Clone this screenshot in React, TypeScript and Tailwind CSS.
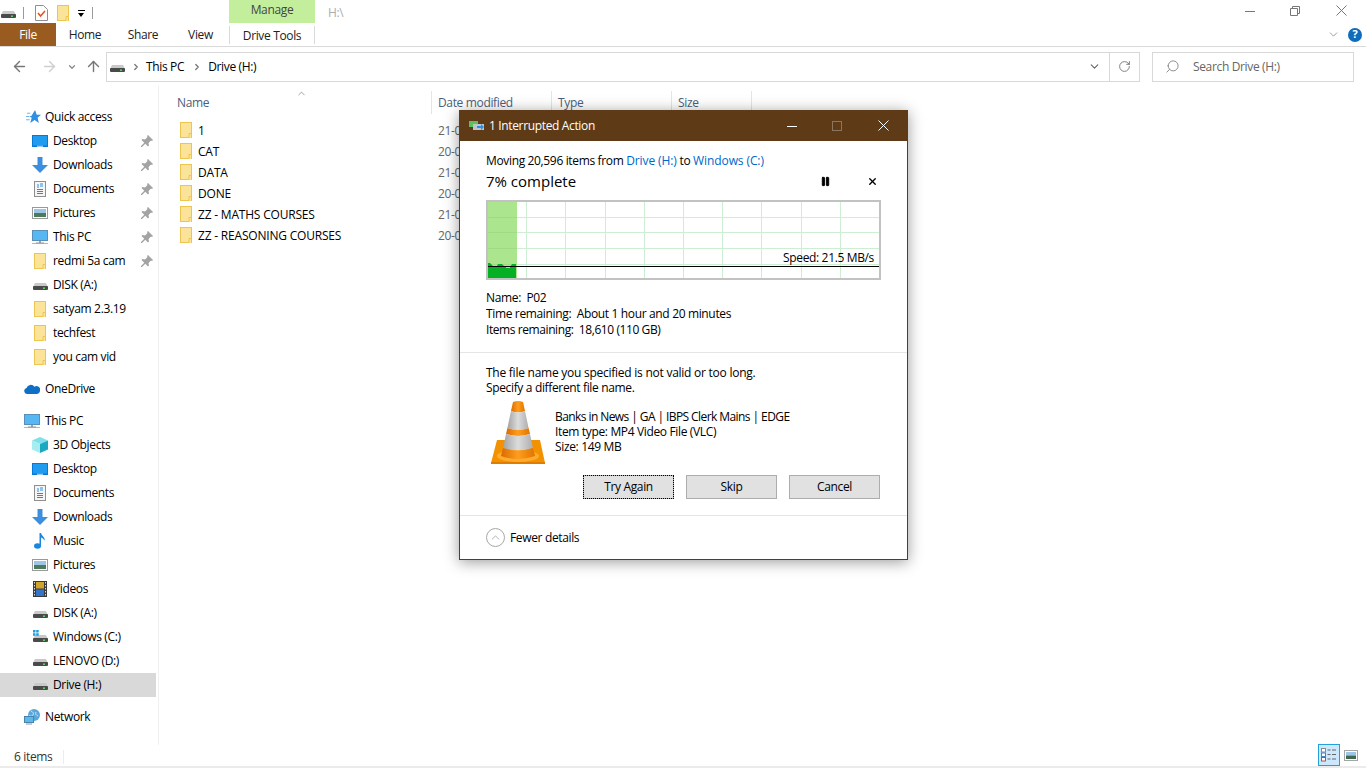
import { ChevronDown, ChevronRight, ChevronUp, ArrowLeft, ArrowRight, ArrowUp, RotateCw, Search, X, Pause } from "lucide-react";

const Folder = ({ className = "" }: { className?: string }) => (
  <svg width="12" height="17" viewBox="0 0 12 17" className={className}>
    <rect x="0.5" y="0.5" width="11" height="15" fill="#fbe39a" stroke="#eec64f" />
    <path d="M9 16V11.5h2.5V16" fill="#fbe39a" stroke="#eec64f" />
  </svg>
);

const Drive = ({ windows = false }: { windows?: boolean }) => (
  <svg width="15" height="12" viewBox="0 0 15 12" className="overflow-visible">
    <path d="M2 4h11l2 4H0z" fill="#c9c9c9" />
    <rect x="0" y="7" width="15" height="4" rx="1" fill="#4a4a4a" />
    <rect x="10" y="8.5" width="2" height="1.4" fill="#5be05b" />
    {windows && <path d="M0-4h2.5v2.5H0zM3.200-4h2.500v2.500H3.200zM0-.8h2.500v2.500H0zM3.200-.8h2.500v2.500H3.200z" fill="#1b9de2" transform="translate(0 3)" />}
  </svg>
);

const Pin = () => (
  <svg width="12" height="12" viewBox="0 0 12 12">
    <path d="M7 0l5 5-1 1-1-.5L7.500 8 8 10.500 7 11.500 4.300 8.700 1 12l-1 0 0-1 3.300-3.300L.5 5 1.500 4 4 4.500 6.500 2 6 1z" fill="#a3a3a3" />
  </svg>
);

const Desktop = () => (
  <svg width="16" height="13" viewBox="0 0 16 13">
    <rect width="16" height="12" fill="#0a78d7" />
    <rect x="1" y="1" width="14" height="9.500" fill="#1f9bf0" />
    <rect x="5" y="10.800" width="6" height="0.800" fill="#fff" />
  </svg>
);

const Downloads = () => (
  <svg width="16" height="16" viewBox="0 0 16 16">
    <path d="M5.500 0h5v8H16l-8 8-8-8h5.500z" fill="#3b8fde" />
  </svg>
);

const Documents = () => (
  <svg width="12" height="16" viewBox="0 0 12 16">
    <rect x="0.500" y="0.500" width="11" height="15" fill="#f5f5f5" stroke="#8f8f8f" />
    <path d="M3 4h2M3 6h2M6 3h3M6 5h3" stroke="#2c8ee0" />
    <path d="M3 8.500h6M3 10.500h6M3 12.500h6" stroke="#777" />
  </svg>
);

const Pictures = () => (
  <svg width="16" height="12" viewBox="0 0 16 12">
    <rect x="0.500" y="0.500" width="15" height="11" fill="#fff" stroke="#999" />
    <rect x="2" y="2" width="12" height="4" fill="#9cc6e8" />
    <rect x="2" y="6" width="12" height="4" fill="#4e7a5c" />
  </svg>
);

const ThisPC = () => (
  <svg width="16" height="15" viewBox="0 0 16 15">
    <rect x="0.500" y="0.500" width="15" height="10" fill="#55b8f2" stroke="#5a90b8" />
    <rect x="7" y="11" width="2" height="2" fill="#9aa7b0" />
    <rect x="0" y="13" width="16" height="1" fill="#aebbc4" />
    <rect x="4" y="12.500" width="8" height="1" fill="#8b98a0" />
  </svg>
);

const Star = () => (
  <svg width="15" height="14" viewBox="0 0 14 13" className="ml-[2px]">
    <path d="M8.500 0l1.500 4.300 4 .2-3.200 2.700L12 12 8 9.300 4 12l1.300-4.800L3 5.500h2z" fill="#2f8fe0" />
    <path d="M0 6h3M0 9h3.500M1 3h3" stroke="#6db5ee" />
  </svg>
);

const OneDrive = () => (
  <svg width="16" height="10" viewBox="0 0 16 10">
    <path d="M3 10a3 3 0 0 1-.5-5.900A4.500 4.500 0 0 1 10.500 2.800 3.500 3.500 0 0 1 16 6.500 3.500 3.500 0 0 1 13 10z" fill="#0f6fc6" />
  </svg>
);

const Objects3D = () => (
  <svg width="16" height="16" viewBox="0 0 16 16">
    <path d="M8 0l8 3.500L8 7 0 3.500z" fill="#7fe0ea" />
    <path d="M0 3.500L8 7v9l-8-3.500z" fill="#a6edf2" />
    <path d="M16 3.500L8 7v9l8-3.500z" fill="#1ba8c0" />
  </svg>
);

const Music = () => (
  <svg width="12" height="16" viewBox="0 0 12 16">
    <ellipse cx="3.500" cy="13" rx="3.500" ry="2.800" fill="#1a86de" />
    <path d="M5.500 0h1.500c.5 3 4.500 4 3.500 8-.5-2-2-3-3.500-3.500V13H5.500z" fill="#1a86de" />
  </svg>
);

const Videos = () => (
  <svg width="14" height="16" viewBox="0 0 14 16">
    <rect width="14" height="16" fill="#3a3a3a" />
    <rect x="3" y="1" width="8" height="6.500" fill="#d0a32b" />
    <rect x="3" y="8.500" width="8" height="6.500" fill="#3473c9" />
    <path d="M1 1h1v1.500H1zM1 4h1v1.500H1zM1 7h1v1.500H1zM1 10h1v1.500H1zM1 13h1v1.500H1zM12 1h1v1.500h-1zM12 4h1v1.500h-1zM12 7h1v1.500h-1zM12 10h1v1.500h-1zM12 13h1v1.500h-1z" fill="#ddd" />
  </svg>
);

const Network = () => (
  <svg width="16" height="16" viewBox="0 0 16 16">
    <circle cx="10" cy="6" r="6" fill="#5aa7dc" />
    <path d="M7 2c2 1 3 2 2 4s-3 1-4 0M12 3c-1 2 0 3 2 4" stroke="#cfe6f5" fill="none" />
    <rect x="0.500" y="7.500" width="9" height="6" fill="#5cb9ef" stroke="#4a82a8" />
    <rect x="2" y="14.500" width="6" height="1" fill="#8b98a0" />
  </svg>
);

const Cone = () => (
  <svg width="57" height="63" viewBox="0 0 57 63">
    <defs>
      <linearGradient id="orange" x1="0" x2="1" y1="0" y2="0">
        <stop offset="0" stopColor="#d96a00" />
        <stop offset="0.500" stopColor="#ff9d1e" />
        <stop offset="1" stopColor="#e07400" />
      </linearGradient>
      <linearGradient id="silver" x1="0" x2="1" y1="0" y2="0">
        <stop offset="0" stopColor="#a2a2a2" />
        <stop offset="0.500" stopColor="#dcdcdc" />
        <stop offset="1" stopColor="#adadad" />
      </linearGradient>
    </defs>
    <path d="M7 39h43l5 23H1z" fill="#f39200" />
    <rect x="1" y="61" width="54" height="2" fill="#e07c00" />
    <ellipse cx="28" cy="55" rx="21" ry="6" fill="#ffab2e" />
    <path d="M23 1Q28-1 33 1L35 10Q28 13 21 10z" fill="url(#orange)" />
    <path d="M21 10Q28 13 35 10L38.600 27Q28 31 17.400 27z" fill="url(#silver)" />
    <path d="M17.400 27Q28 31 38.600 27L40 33Q28 37 16 33z" fill="url(#orange)" />
    <path d="M16 33Q28 37 40 33L43 47Q28 52 13 47z" fill="url(#silver)" />
    <path d="M13 47Q28 52 43 47L45 55Q28 61 11 55z" fill="url(#orange)" />
  </svg>
);

const MoveIcon = () => (
  <svg width="15" height="10" viewBox="0 0 15 10">
    <rect x="0" y="0" width="9" height="6" fill="#5bbf5b" />
    <rect x="4" y="3" width="11" height="6" fill="#b9c6d1" />
    <path d="M8 5h4v-2l3 3-3 3v-2H8z" fill="#2e8fe6" />
  </svg>
);

const WinMinimize = ({ color }: { color: string }) => (
  <svg width="10" height="10" viewBox="0 0 10 10"><path d="M0 5.500h10" stroke={color} /></svg>
);

const WinClose = ({ color }: { color: string }) => (
  <svg width="11" height="11" viewBox="0 0 11 11"><path d="M.5.500l10 10M10.500.500l-10 10" stroke={color} /></svg>
);

const quickAccess = [
  { name: "Desktop", icon: <Desktop />, pin: true },
  { name: "Downloads", icon: <Downloads />, pin: true },
  { name: "Documents", icon: <Documents />, pin: true },
  { name: "Pictures", icon: <Pictures />, pin: true },
  { name: "This PC", icon: <ThisPC />, pin: true },
  { name: "redmi 5a cam", icon: <Folder />, pin: true },
  { name: "DISK (A:)", icon: <Drive /> },
  { name: "satyam 2.3.19", icon: <Folder /> },
  { name: "techfest", icon: <Folder /> },
  { name: "you cam vid", icon: <Folder /> },
];

const thisPc = [
  { name: "3D Objects", icon: <Objects3D /> },
  { name: "Desktop", icon: <Desktop /> },
  { name: "Documents", icon: <Documents /> },
  { name: "Downloads", icon: <Downloads /> },
  { name: "Music", icon: <Music /> },
  { name: "Pictures", icon: <Pictures /> },
  { name: "Videos", icon: <Videos /> },
  { name: "DISK (A:)", icon: <Drive /> },
  { name: "Windows (C:)", icon: <Drive windows /> },
  { name: "LENOVO (D:)", icon: <Drive /> },
];

const files = [
  { name: "1", date: "21-0" },
  { name: "CAT", date: "20-0" },
  { name: "DATA", date: "21-0" },
  { name: "DONE", date: "20-0" },
  { name: "ZZ - MATHS COURSES", date: "21-0" },
  { name: "ZZ - REASONING COURSES", date: "20-0" },
];

const NavHeader = ({ icon, name, className = "" }: { icon: React.ReactNode; name: string; className?: string }) => (
  <div className={`h-6 flex items-center pl-[24px] ${className}`}>
    <span className="w-[21px] flex justify-start shrink-0">{icon}</span>
    <span className="whitespace-nowrap">{name}</span>
  </div>
);

const NavItem = ({ icon, name, pin, active }: { icon: React.ReactNode; name: string; pin?: boolean; active?: boolean }) => (
  <div className={`h-6 flex items-center pl-[32px] ${active ? "bg-[#d9d9d9]" : ""}`}>
    <span className="w-4 mr-[5px] flex justify-center shrink-0">{icon}</span>
    <span className="whitespace-nowrap">{name}</span>
    {pin && <span className="ml-auto mr-[3px]"><Pin /></span>}
  </div>
);

const DialogButton = ({ label, focused }: { label: string; focused?: boolean }) => (
  <button className={`w-[91px] h-6 bg-[#e1e1e1] border border-[#adadad] text-center ${focused ? "outline-1 outline-dotted outline-[#000] -outline-offset-1" : ""}`}>
    {label}
  </button>
);

const vLines = [40, 79, 119, 158, 197, 236, 275, 315, 354];
const hLines = [17, 32, 48, 64];

const Graph = () => (
  <div className="relative w-[395px] h-[80px] mt-[8px]">
    <svg width="395" height="80" viewBox="0 0 395 80">
      <rect x="1" y="1" width="393" height="78" fill="#fff" stroke="#c2c2c2" strokeWidth="2" />
      {vLines.map((x) => <rect key={x} x={x} y="2" width="1" height="76" fill="#cdeed3" />)}
      {hLines.map((y) => <rect key={y} x="2" y={y} width="391" height="1" fill="#cdeed3" />)}
      <rect x="2" y="2" width="29" height="76" fill="#abe68f" />
      {hLines.map((y) => <rect key={y} x="2" y={y} width="29" height="1" fill="#9fdc85" />)}
      <path d="M2 63h2l2 2 1 1h4l1-2h4l2 2 2 1v1h4v-1l2-3h4v14H2z" fill="#06b025" />
      <rect x="2" y="66" width="391" height="1" fill="#000" />
    </svg>
    <span className="absolute right-[7px] top-[50px] leading-4">Speed: 21.5 MB/s</span>
  </div>
);

export default function App() {
  return (
    <div className="relative w-[1366px] h-[768px] overflow-hidden bg-white flex flex-col text-[12px] text-[#000] font-['Open_Sans','Liberation_Sans',sans-serif] tracking-[-0.35px]">
      {/* Title bar */}
      <div className="h-[23px] flex items-start shrink-0">
        <div className="w-[229px] h-[23px] flex items-center pl-[1px] pt-[3px]">
          <Drive />
          <span className="w-px h-[12px] bg-[#9a9a9a] ml-[7px]" />
          <span className="ml-[11px]">
            <svg width="13" height="16" viewBox="0 0 13 16">
              <path d="M.5.500h8l4 4v11H.500z" fill="#fff" stroke="#8f8f8f" />
              <path d="M3 8l2.500 3L10 6" fill="none" stroke="#e8501e" strokeWidth="1.500" />
            </svg>
          </span>
          <Folder className="ml-[9px]" />
          <span className="ml-[7px] flex flex-col items-center w-[10px]">
            <span className="w-[7px] h-px bg-black mb-[2px]" />
            <span className="w-0 h-0 border-x-[3.500px] border-x-transparent border-t-[4px] border-t-black" />
          </span>
          <span className="w-px h-[12px] bg-[#9a9a9a] ml-[6px]" />
        </div>
        <div className="w-[86px] h-[23px] pb-[4px] bg-[#c3ef9d] flex items-center justify-center text-[#444]">Manage</div>
        <span className="ml-[13px] mt-[4px] text-[#adadad]">H:\</span>
        <div className="ml-auto flex items-center h-[21px] pr-[19px]">
          <WinMinimize color="#777" />
          <svg width="10" height="10" viewBox="0 0 10 10" className="ml-[35px]"><path d="M.500 2.500h7v7h-7zM2.500 2.500v-2h7v7h-2" fill="none" stroke="#777" /></svg>
          <span className="ml-[36px] flex"><WinClose color="#777" /></span>
        </div>
      </div>

      {/* Ribbon tabs */}
      <div className="h-[24px] flex items-stretch shrink-0 border-b border-[#dadada] relative">
        <div className="w-[56px] pt-[1px] bg-[#995b1f] text-white flex items-center justify-center">File</div>
        <div className="w-[58px] pt-[1px] flex items-center justify-center text-[#222]">Home</div>
        <div className="w-[58px] pt-[1px] flex items-center justify-center text-[#222]">Share</div>
        <div className="w-[57px] pt-[1px] flex items-center justify-center text-[#222]">View</div>
        <div className="w-[86px] h-[18px] border-x border-[#dadada] flex items-center justify-center text-[#222] mt-[3px] pt-[2px]">Drive Tools</div>
        <div className="ml-auto flex items-center pr-[4px] gap-[8px]">
          <ChevronDown size={13} strokeWidth={1.500} className="text-[#888]" />
          <span className="w-[14px] h-[14px] rounded-full bg-[#0f6cbd] text-white text-[11px] font-bold flex items-center justify-center">?</span>
        </div>
      </div>

      {/* Address bar */}
      <div className="h-[36px] flex items-center shrink-0 pr-[12px] pt-[3px]">
        <div className="w-[106px] flex items-center pl-[11px]">
          <ArrowLeft size={17} strokeWidth={2} className="text-[#777]" />
          <ArrowRight size={17} strokeWidth={2} className="ml-[13px] text-[#cfcfcf]" />
          <ChevronDown size={10} strokeWidth={3} className="ml-[9px] text-[#8a8a8a]" />
          <ArrowUp size={17} strokeWidth={2} className="ml-[8px] text-[#777]" />
        </div>
        <div className="w-[1034px] h-[30px] border border-[#d9d9d9] flex items-center">
          <span className="ml-[3px] flex"><Drive /></span>
          <ChevronRight size={10} strokeWidth={3} className="ml-[6px] text-[#777]" />
          <span className="ml-[5px]">This PC</span>
          <ChevronRight size={10} strokeWidth={3} className="ml-[8px] text-[#777]" />
          <span className="ml-[6px]">Drive (H:)</span>
          <ChevronDown size={13} strokeWidth={2} className="ml-auto mr-[8px] text-[#666]" />
          <span className="w-px h-full bg-[#d9d9d9]" />
          <RotateCw size={13} strokeWidth={1.500} className="mx-[8px] text-[#666]" />
        </div>
        <div className="ml-[12px] w-[202px] h-[30px] border border-[#d9d9d9] flex items-center text-[#666]">
          <Search size={15} strokeWidth={1.500} className="ml-[12px] -scale-x-100 text-[#888]" />
          <span className="ml-[13px]">Search Drive (H:)</span>
        </div>
      </div>

      {/* Main */}
      <div className="flex-1 flex min-h-0">
        <nav className="w-[159px] shrink-0 border-r border-[#f0f0f0] pt-[19px] mt-[3px] pr-[2px]">
          <NavHeader icon={<Star />} name="Quick access" />
          {quickAccess.map((i) => <NavItem key={i.name} {...i} />)}
          <NavHeader icon={<OneDrive />} name="OneDrive" className="mt-2" />
          <NavHeader icon={<ThisPC />} name="This PC" className="mt-2" />
          {thisPc.map((i) => <NavItem key={i.name} {...i} />)}
          <NavItem icon={<Drive />} name="Drive (H:)" active />
          <NavHeader icon={<Network />} name="Network" className="mt-2" />
        </nav>
        <main className="flex-1 pt-[8px]">
          <div className="relative h-[23px] flex text-[#4c607a]">
            <div className="w-[273px] border-r border-[#e5e5e5] pl-[18px] flex items-center">Name</div>
            <span className="absolute left-[137px] top-[-3px] text-[#777]"><ChevronUp size={11} strokeWidth={1.500} /></span>
            <div className="w-[120px] border-r border-[#e5e5e5] pl-[6px] flex items-center">Date modified</div>
            <div className="w-[120px] border-r border-[#e5e5e5] pl-[6px] flex items-center">Type</div>
            <div className="w-[80px] border-r border-[#e5e5e5] pl-[6px] flex items-center">Size</div>
          </div>
          <div className="mt-[6px]">
            {files.map((f) => (
              <div key={f.name} className="h-[21px] flex items-center">
                <div className="w-[273px] flex items-center pl-[21px]">
                  <Folder />
                  <span className="ml-[6px] whitespace-nowrap tracking-[-0.2px]">{f.name}</span>
                </div>
                <span className="pl-[6px] text-[#666]">{f.date}</span>
              </div>
            ))}
          </div>
        </main>
      </div>

      {/* Status bar */}
      <div className="h-[23px] flex items-center shrink-0 pl-[14px] text-[#333] relative">
        <span>6 items</span>
        <span className="ml-[11px] w-px h-[14px] bg-[#ececec]" />
        <div className="ml-auto flex items-center pr-[8px] gap-[4px] self-start -mt-[1px]">
          <span className="w-[22px] h-[22px] border border-[#26a0da] bg-[#cce8ff] flex items-center justify-center">
            <svg width="16" height="14" viewBox="0 0 16 14">
              <rect x="0.500" y="0.500" width="4" height="3.500" fill="#fff" stroke="#888" />
              <rect x="0.500" y="5" width="4" height="3.500" fill="#fff" stroke="#4a7fc0" />
              <rect x="0.500" y="9.500" width="4" height="3.500" fill="#fff" stroke="#c04a4a" />
              <path d="M6.500 2h3M11 2h4M6.500 6.500h3M11 6.500h4M6.500 11h3M11 11h4" stroke="#666" />
            </svg>
          </span>
          <svg width="14" height="11" viewBox="0 0 14 11"><rect x="0.500" y="0.500" width="13" height="10" fill="#fff" stroke="#a5a5a5" /><rect x="2" y="2" width="10" height="3.500" fill="#9cc6e8" /><rect x="2" y="5.500" width="10" height="3.500" fill="#3f6a50" /></svg>
        </div>
        <div className="absolute left-0 right-0 bottom-0 h-[2px] bg-[#ebebeb]" />
      </div>

      {/* Move dialog */}
      <div className="absolute left-[459px] top-[110px] w-[449px] h-[450px] bg-white border border-[#5f3a17] border-t-0 shadow-[0_2px_14px_rgba(0,0,0,0.4)] flex flex-col">
        <div className="h-[31px] -mx-px bg-[#5f3a17] text-white flex items-center pl-[10px] shrink-0">
          <MoveIcon />
          <span className="ml-[5px]">1 Interrupted Action</span>
          <div className="ml-auto flex items-center pr-[19px]">
            <WinMinimize color="#fff" />
            <svg width="10" height="10" viewBox="0 0 10 10" className="ml-[35px]"><rect x="0.500" y="0.500" width="9" height="9" fill="none" stroke="#8c7660" /></svg>
            <span className="ml-[36px] flex"><WinClose color="#fff" /></span>
          </div>
        </div>
        <div className="px-[26px] pt-[12px] h-[212px] shrink-0 border-b border-[#e5e5e5]">
          <p className="leading-4">
            Moving 20,596 items from <span className="text-[#0066cc] tracking-[-0.1px]">Drive (H:)</span> to <span className="text-[#0066cc] tracking-[-0.1px]">Windows (C:)</span>
          </p>
          <div className="flex items-center h-[22px] mt-[1px]">
            <span className="text-[15px] tracking-[0px]">7% complete</span>
            <Pause size={11} fill="#000" strokeWidth={2} className="ml-auto mr-[36px]" />
            <X size={11} strokeWidth={3} className="mr-[3px]" />
          </div>
          <Graph />
          <div className="mt-[10px] leading-4">
            <p>Name:&nbsp; P02</p>
            <p>Time remaining:&nbsp; About 1 hour and 20 minutes</p>
            <p className="tracking-[-0.42px]">Items remaining:&nbsp; 18,610 (110 GB)</p>
          </div>
        </div>
        <div className="px-[26px] pt-[12px] h-[163px] shrink-0 border-b border-[#e5e5e5]">
          <p className="leading-[15px] tracking-[-0.25px]">The file name you specified is not valid or too long.</p>
          <p className="leading-[15px]">Specify a different file name.</p>
          <div className="flex mt-[6px] pl-[4px]">
            <Cone />
            <div className="ml-[8px] mt-[8px] leading-[15px]">
              <p className="tracking-[-0.58px]">Banks in News | GA | IBPS Clerk Mains | EDGE</p>
              <p>Item type: MP4 Video File (VLC)</p>
              <p>Size: 149 MB</p>
            </div>
          </div>
          <div className="flex justify-end gap-[12px] mt-[11px] mr-[1px]">
            <DialogButton label="Try Again" focused />
            <DialogButton label="Skip" />
            <DialogButton label="Cancel" />
          </div>
        </div>
        <div className="flex-1 flex items-center pl-[26px]">
          <span className="w-[19px] h-[19px] rounded-full border border-[#a8a8a8] flex items-center justify-center text-[#a0a0a0]">
            <ChevronUp size={13} strokeWidth={1.500} />
          </span>
          <span className="ml-[5px]">Fewer details</span>
        </div>
      </div>
    </div>
  );
}
